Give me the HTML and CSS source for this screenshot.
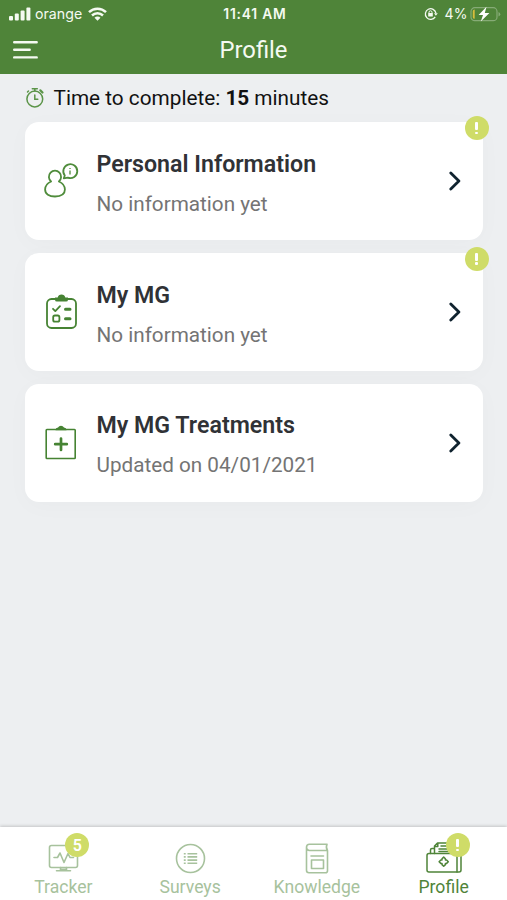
FILE: index.html
```html
<!DOCTYPE html>
<html lang="en">
<head>
    <meta charset="UTF-8">
    <meta name="viewport" content="width=device-width, initial-scale=1.0">
    <title>Profile</title>
    <link rel="stylesheet" href="styles.css">
</head>
<body>
    <div class="app">
        <header class="header">
            <div class="status-bar">
                <div class="status-left">
                    <svg width="22" height="14" viewBox="0 0 22 14" fill="currentColor">
                        <rect x="0" y="9" width="4" height="4.5" rx="1"/>
                        <rect x="5.8" y="6.5" width="4" height="7" rx="1"/>
                        <rect x="11.6" y="3.5" width="4" height="10" rx="1"/>
                        <rect x="17.4" y="0.5" width="4" height="13" rx="1"/>
                    </svg>
                    <span class="carrier">orange</span>
                    <svg width="19" height="14" viewBox="0 0 19 14" fill="none" stroke="currentColor" stroke-width="2.5">
                        <path d="M1 5.2a12.2 12.2 0 0 1 17 0"/>
                        <path d="M4 8.5a7.9 7.9 0 0 1 11 0"/>
                        <path d="M9.5 13.8 6.5 10.8a4.2 4.2 0 0 1 6 0z" fill="currentColor" stroke="none"/>
                    </svg>
                </div>
                <span class="clock">11:41 AM</span>
                <div class="status-right">
                    <svg width="14" height="14" viewBox="0 0 14 14" fill="none" stroke="currentColor" stroke-width="1.3">
                        <path d="M11.2 9.8A5.3 5.3 0 1 1 11.9 6.2"/>
                        <path d="M10 6.3h3.8l-1.9 2.5z" fill="currentColor" stroke="none"/>
                        <path d="M5 6.4V5.3a1.5 1.5 0 0 1 3 0v1.1" stroke-width="1"/>
                        <rect x="4.2" y="6" width="4.6" height="3.6" rx=".5" fill="currentColor" stroke="none"/>
                    </svg>
                    <span class="battery-level">4%</span>
                    <svg width="31" height="16" viewBox="0 0 31 16">
                        <rect x="1" y="1.7" width="26" height="13" rx="3.8" fill="none" stroke="#86ab76" stroke-width="1.2"/>
                        <path d="M28.5 6v4.5q1.8-.6 1.8-2.2T28.5 6z" fill="#86ab76"/>
                        <path d="M2.8 5.2q0-1.6 1.9-1.6v9.2q-1.9 0-1.9-1.6z" fill="#d6bd3c"/>
                        <path d="M16.5.8 8.6 9H13l-2.2 6.4L19.4 7h-4.6z" fill="#fff"/>
                    </svg>
                </div>
            </div>
            <div class="title-bar">
                <svg width="26" height="20" viewBox="0 0 26 20" stroke="currentColor" stroke-width="2.4" stroke-linecap="round">
                    <path d="M2.2 2.2h22.5M2.2 9.8h15.5M2.2 17.4h22.5"/>
                </svg>
                <h1>Profile</h1>
            </div>
        </header>

        <main class="content">
            <div class="time-note">
                <svg width="20" height="22" viewBox="0 0 20 22" fill="none" stroke="#5b9448" stroke-width="1.5" stroke-linecap="round">
                    <circle cx="9.8" cy="12" r="7.9"/>
                    <path d="M9.8 8v4.2h3M7.3 1.8h5M9.8 1.8V4M3.5 4l-1 1"/>
                    <path d="m15.3 3.3 2.2 2.2" stroke-width="2.2"/>
                </svg>
                <p>Time to complete: <b>15</b> minutes</p>
            </div>

            <a class="card">
                <svg width="36" height="38" viewBox="0 0 36 38" fill="none" stroke="#4f8c3b" stroke-width="1.8" stroke-linejoin="round">
                    <path d="M7.1 19.5a6.1 6.1 0 1 1 7.8 0c3.8 1.7 6 4.7 6 8.1 0 4.6-4.1 6.9-9.9 6.9S1.1 32.2 1.1 27.6c0-3.4 2.2-6.4 6-8.1z"/>
                    <path d="M20.8 13.5a7 7 0 1 1 3 2.2l-4 .6z"/>
                    <path d="M26 8.5v4M26 5.9v1.2" stroke-width="1.3"/>
                </svg>
                <div class="card-text">
                    <h2>Personal Information</h2>
                    <p>No information yet</p>
                </div>
                <svg class="chevron" width="12" height="20" viewBox="0 0 12 20"><path d="m1.8 2 8.1 8-8.1 8"/></svg>
                <span class="badge"><i></i></span>
            </a>

            <a class="card">
                <svg width="36" height="38" viewBox="0 0 36 38" fill="none" stroke="#468333" stroke-width="1.8" stroke-linecap="round">
                    <rect x="3" y="6" width="29" height="29" rx="4.5"/>
                    <path d="M11 4.5h2.7a3.9 3.9 0 0 1 7.6 0H24v2.2q0 1.9-1.9 1.9h-9.2q-1.9 0-1.9-1.9z" fill="#468333" stroke="none"/>
                    <path d="m9 15.8 2.3 2.3 4.7-5" stroke-linejoin="round"/>
                    <path d="M21.5 16.3H26M21.5 25.7H26" stroke-width="3"/>
                    <rect x="9.2" y="22.5" width="6.2" height="6.2" rx="1.7"/>
                </svg>
                <div class="card-text">
                    <h2>My MG</h2>
                    <p>No information yet</p>
                </div>
                <svg class="chevron" width="12" height="20" viewBox="0 0 12 20"><path d="m1.8 2 8.1 8-8.1 8"/></svg>
                <span class="badge"><i></i></span>
            </a>

            <a class="card">
                <svg width="36" height="38" viewBox="0 0 36 38" fill="none" stroke="#468333" stroke-width="1.6">
                    <rect x="2.2" y="5.5" width="29" height="29" rx=".7"/>
                    <path d="M11.5 6.3q0-2.5 2.5-2.8a3.5 3.5 0 0 1 6 0q2.500.3 2.500 2.800z" fill="#468333" stroke="none"/>
                    <path d="M17 14.5V26M11.2 20.2h11.6" stroke-width="2.7" stroke-linecap="round"/>
                </svg>
                <div class="card-text">
                    <h2>My MG Treatments</h2>
                    <p>Updated on 04/01/2021</p>
                </div>
                <svg class="chevron" width="12" height="20" viewBox="0 0 12 20"><path d="m1.8 2 8.1 8-8.1 8"/></svg>
            </a>
        </main>

        <nav class="tab-bar">
            <a class="tab">
                <svg width="36" height="34" viewBox="0 0 36 34" fill="none" stroke="currentColor" stroke-width="1.6" stroke-linecap="round" stroke-linejoin="round">
                    <rect x="4.5" y="4.5" width="28" height="22" rx="2"/>
                    <path d="M9 16.5h3.500l2.500-4.500 4 9.500 4-9 2 4h3.500"/>
                    <path d="M15.5 26.5V29M21.5 26.5V29M16.5 28.2h4M11.5 29.8h14"/>
                </svg>
                <span>Tracker</span>
                <span class="badge tab-badge">5</span>
            </a>
            <a class="tab">
                <svg width="36" height="34" viewBox="0 0 36 34" fill="none" stroke="currentColor" stroke-width="1.6">
                    <circle cx="18.5" cy="17.5" r="14"/>
                    <path d="M15.5 12.7h9.700M15.5 15.9h9.700M15.5 19.1h9.700M15.5 22.2h9.700"/>
                    <path d="M11.8 12.7h1.900M11.8 15.9h1.900M11.8 19.1h1.900M11.8 22.2h1.900"/>
                </svg>
                <span>Surveys</span>
            </a>
            <a class="tab">
                <svg width="36" height="34" viewBox="0 0 36 34" fill="none" stroke="currentColor" stroke-width="1.6" stroke-linecap="round" stroke-linejoin="round">
                    <path d="M28 3.3H10.5q-3 0-3 3v23q0 2.500 2.500 2.500h16.500q2 0 2-2V9.500h-18q-3 0-3-3.200M28 3.300q-1.500 3 .5 6.200M12 15h12.500"/>
                    <rect x="12.5" y="19" width="12" height="8.5"/>
                </svg>
                <span>Knowledge</span>
            </a>
            <a class="tab active">
                <svg width="36" height="34" viewBox="0 0 36 34" fill="none" stroke="currentColor" stroke-width="1.5" stroke-linecap="round" stroke-linejoin="round">
                    <rect x="1" y="12.5" width="34" height="18.5" rx="2"/>
                    <path d="M31 12.5V31M4.5 12.5V9q0-1.500 1.500-1.500h2.500M8.500 12.500V5l3-3H29v10.500M8.500 5.500h3.300V2M15 5h10M13 8h12M13 10.500h12"/>
                    <path d="M16 19v-1.200l1.700-1.700 1.700 1.700V19h1.200l1.700 1.700-1.700 1.700h-1.200v1.200l-1.700 1.700-1.700-1.700v-1.200h-1.200l-1.700-1.700 1.700-1.700z"/>
                </svg>
                <span>Profile</span>
                <span class="badge tab-badge"><i></i></span>
            </a>
        </nav>
    </div>
</body>
</html>
```
FILE: styles.css
```css
:root {
    --primary: #4f8439;
    --muted: #a7c29d;
    --badge: #cfdc68;
    --background: #edeff1;
    --heading: #303236;
    --text: #747474;
}

* {
    box-sizing: border-box;
    margin: 0;
    padding: 0;
}

body {
    font-family: Roboto, sans-serif;
    background: var(--background);
}

svg {
    display: block;
    flex-shrink: 0;
}

.app {
    display: flex;
    flex-direction: column;
    height: 100vh;
    overflow: hidden;
}

.header {
    height: 74px;
    background: var(--primary);
    color: #f5faf2;
}

.status-bar {
    display: grid;
    grid-template-columns: 1fr auto 1fr;
    align-items: center;
    height: 27px;
    padding: 0 6px 0 9px;
    font-family: Inter, sans-serif;
    font-size: 14px;
}

.status-left, .status-right {
    display: flex;
    align-items: center;
}

.status-right {
    justify-content: flex-end;
}

.carrier {
    margin: 0 6px 0 4px;
    font-size: 14.2px;
}

.clock {
    font-size: 13.8px;
    font-weight: 600;
    letter-spacing: 0.8px;
}

.battery-level {
    margin: 0 2px 0 6px;
    letter-spacing: 0.4px;
}

.title-bar {
    display: grid;
    grid-template-columns: 1fr auto 1fr;
    align-items: center;
    height: 46px;
    padding: 0 12px;
}

.title-bar h1 {
    font-size: 23.8px;
    font-weight: 400;
}

.content {
    display: flex;
    flex: 1;
    flex-direction: column;
    gap: 12.5px;
    padding: 0 24.5px;
}

.time-note {
    display: flex;
    align-items: center;
    gap: 9px;
    height: 35.5px;
    padding-top: 12px;
    color: #111;
    font-size: 20.75px;
}

.card {
    display: flex;
    position: relative;
    align-items: center;
    height: 118.3px;
    padding: 0 22px 0 19px;
    border-radius: 14px;
    background: #fff;
    box-shadow: 0 4px 24px rgba(0, 0, 0, 0.025);
}

.card-text {
    flex: 1;
    margin-left: 17px;
    padding-top: 3.4px;
}

.card h2 {
    color: var(--heading);
    font-size: 23.2px;
    font-weight: 600;
    line-height: 30px;
}

.card p {
    margin-top: 12px;
    color: var(--text);
    font-size: 20.7px;
    line-height: 26px;
}

.chevron {
    fill: none;
    stroke: #10232f;
    stroke-width: 2.8;
    stroke-linecap: round;
    stroke-linejoin: round;
}

.badge {
    display: flex;
    position: absolute;
    top: -6px;
    right: -6px;
    align-items: center;
    justify-content: center;
    width: 24px;
    height: 24px;
    border-radius: 50%;
    background: var(--badge);
    color: #fff;
    font-size: 16px;
    font-weight: 600;
}

/* exclamation mark */
.badge i::before, .badge i::after {
    content: "";
    display: block;
    width: 2.4px;
    height: 8px;
    border-radius: 1px;
    background: #fff;
}

.badge i::after {
    height: 2.4px;
    margin-top: 1.4px;
}

.tab-bar {
    display: grid;
    grid-template-columns: repeat(4, 1fr);
    height: 73px;
    background: #fff;
    box-shadow: 0 -1px 3px rgba(0, 0, 0, 0.18);
}

.tab {
    display: flex;
    position: relative;
    flex-direction: column;
    align-items: center;
    padding-top: 14px;
    color: var(--muted);
    font-size: 17.6px;
    line-height: 25px;
}

.tab.active {
    color: var(--primary);
}

.tab-badge {
    top: 6px;
    right: auto;
    left: calc(50% + 2px);
}
```
